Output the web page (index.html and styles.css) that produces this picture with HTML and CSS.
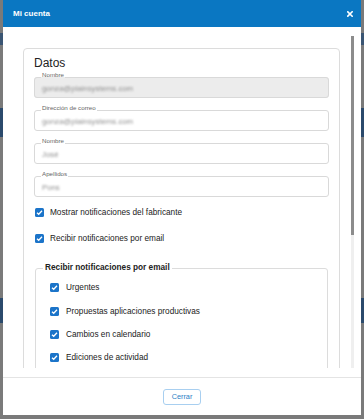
FILE: index.html
```html
<!DOCTYPE html>
<html lang="es">
<head>
<meta charset="utf-8">
<title>Mi cuenta</title>
<link rel="stylesheet" href="styles.css">
</head>
<body>
<div class="modal">
  <div class="modal-header">
    <span class="title">Mi cuenta</span>
    <svg class="close" viewBox="0 0 6 6"><path d="M0.8 0.8 L5.2 5.2 M5.2 0.8 L0.8 5.2" stroke="#fff" stroke-width="1.6" stroke-linecap="square"/></svg>
  </div>
  <div class="modal-body">
    <div class="scroll">
      <div class="card">
        <h2 class="heading">Datos</h2>
        <fieldset class="field disabled first"><legend>Nombre</legend><div class="value">gonza@plainsystems.com</div></fieldset>
        <fieldset class="field"><legend>Dirección de correo</legend><div class="value">gonza@plainsystems.com</div></fieldset>
        <fieldset class="field"><legend>Nombre</legend><div class="value">José</div></fieldset>
        <fieldset class="field"><legend>Apellidos</legend><div class="value">Pons</div></fieldset>
        <div class="checks">
          <label class="check outer"><svg viewBox="0 0 9 9"><rect width="9" height="9" rx="1.5" fill="#1b74c9"/><path d="M2 4.7 L3.7 6.3 L7 2.8" stroke="#fff" stroke-width="1.3" fill="none"/></svg>Mostrar notificaciones del fabricante</label>
          <label class="check outer"><svg viewBox="0 0 9 9"><rect width="9" height="9" rx="1.5" fill="#1b74c9"/><path d="M2 4.7 L3.7 6.3 L7 2.8" stroke="#fff" stroke-width="1.3" fill="none"/></svg>Recibir notificaciones por email</label>
        </div>
        <fieldset class="group">
          <legend>Recibir notificaciones por email</legend>
          <div class="group-items">
            <label class="check inner"><svg viewBox="0 0 9 9"><rect width="9" height="9" rx="1.5" fill="#1b74c9"/><path d="M2 4.7 L3.7 6.3 L7 2.8" stroke="#fff" stroke-width="1.3" fill="none"/></svg>Urgentes</label>
            <label class="check inner"><svg viewBox="0 0 9 9"><rect width="9" height="9" rx="1.5" fill="#1b74c9"/><path d="M2 4.7 L3.7 6.3 L7 2.8" stroke="#fff" stroke-width="1.3" fill="none"/></svg>Propuestas aplicaciones productivas</label>
            <label class="check inner"><svg viewBox="0 0 9 9"><rect width="9" height="9" rx="1.5" fill="#1b74c9"/><path d="M2 4.7 L3.7 6.3 L7 2.8" stroke="#fff" stroke-width="1.3" fill="none"/></svg>Cambios en calendario</label>
            <label class="check inner"><svg viewBox="0 0 9 9"><rect width="9" height="9" rx="1.5" fill="#1b74c9"/><path d="M2 4.7 L3.7 6.3 L7 2.8" stroke="#fff" stroke-width="1.3" fill="none"/></svg>Ediciones de actividad</label>
          </div>
        </fieldset>
      </div>
    </div>
    <div class="scrollbar"><div class="thumb"></div></div>
  </div>
  <div class="modal-footer">
    <button class="btn" type="button">Cerrar</button>
  </div>
</div>
</body>
</html>
```

FILE: styles.css
```css
html, body {
  margin: 0;
  height: 419px;
  overflow: hidden;
}
body {
  font-family: "Liberation Sans", Arial, sans-serif;
  background: linear-gradient(to bottom, #7a7a7a 0 33px, #3a5573 33px 45px, #7a7a7a 45px 108px, #2b4a6c 108px 137px, #7a7a7a 137px 298px, #2b4a6c 298px 323px, #7a7a7a 323px);
}
.modal {
  margin: 0 3px;
  width: 358px;
  height: 415px;
  background: #fff;
  display: flex;
  flex-direction: column;
}
.modal-header {
  flex: none;
  height: 27px;
  background: #0a77c2;
  color: #fff;
  display: flex;
  align-items: center;
  justify-content: space-between;
  padding: 0 8px 0 10px;
}
.title {
  font-size: 8px;
  font-weight: bold;
}
.close {
  width: 6px;
  height: 6px;
}
.modal-body {
  flex: 1;
  min-height: 0;
  display: flex;
  padding: 9px 6px 9px 10px;
}
.scroll {
  flex: 1;
  min-width: 0;
  overflow: hidden;
  padding: 12px 8px 0 10px;
}
.scrollbar {
  flex: none;
  width: 3px;
  margin-left: 3px;
  margin-right: 1px;
  background: #efefef;
}
.thumb {
  height: 199px;
  background: #8c8c8c;
}
.card {
  border: 1px solid #dcdcdc;
  border-radius: 4px;
  padding: 7px 10px 0;
  min-height: 540px;
  box-sizing: border-box;
}
.heading {
  margin: 0;
  font-size: 12px;
  line-height: 14px;
  font-weight: normal;
  color: #222;
}
.field {
  margin: 5.5px 0 0;
  border: 1px solid #d9d9d9;
  border-radius: 3px;
  padding: 0 7px 3.5px;
  min-width: 0;
}
.field.first {
  margin-top: 0.5px;
}
.field.disabled {
  background: #ececec;
}
.field legend {
  font-size: 6.2px;
  line-height: 7px;
  padding: 0 1px 6px;
  margin-left: -1px;
  color: #666;
}
.value {
  height: 10px;
  line-height: 10px;
  font-size: 7.8px;
  color: #8f8f8f;
  filter: blur(1.3px);
}
.checks {
  padding-top: 2px;
}
.check {
  display: flex;
  align-items: center;
  font-size: 8.25px;
  color: #222;
}
.check svg {
  flex: none;
  width: 9px;
  height: 9px;
}
.check.outer {
  height: 26px;
}
.check.outer svg {
  margin: 0 6px 0 1px;
}
.check.inner {
  height: 23.4px;
}
.check.inner svg {
  margin-right: 7px;
}
.group {
  margin: 12px 1px 0;
  border: 1px solid #dcdcdc;
  border-radius: 3px;
  padding: 0 10px 0 7px;
  min-width: 0;
  min-height: 260px;
}
.group legend {
  font-size: 8.25px;
  line-height: 10px;
  font-weight: bold;
  color: #222;
  padding: 0 2px;
}
.group-items {
  padding: 3px 0 0 7px;
}
.modal-footer {
  flex: none;
  height: 37px;
  border-top: 1px solid #e4e4e4;
  display: flex;
  align-items: center;
  justify-content: center;
}
.btn {
  width: 38px;
  height: 16px;
  padding: 0;
  border: 1px solid #a8cff0;
  border-radius: 3px;
  background: #fff;
  color: #2a7fc6;
  font-family: "Liberation Sans", Arial, sans-serif;
  font-size: 7.3px;
}
```
